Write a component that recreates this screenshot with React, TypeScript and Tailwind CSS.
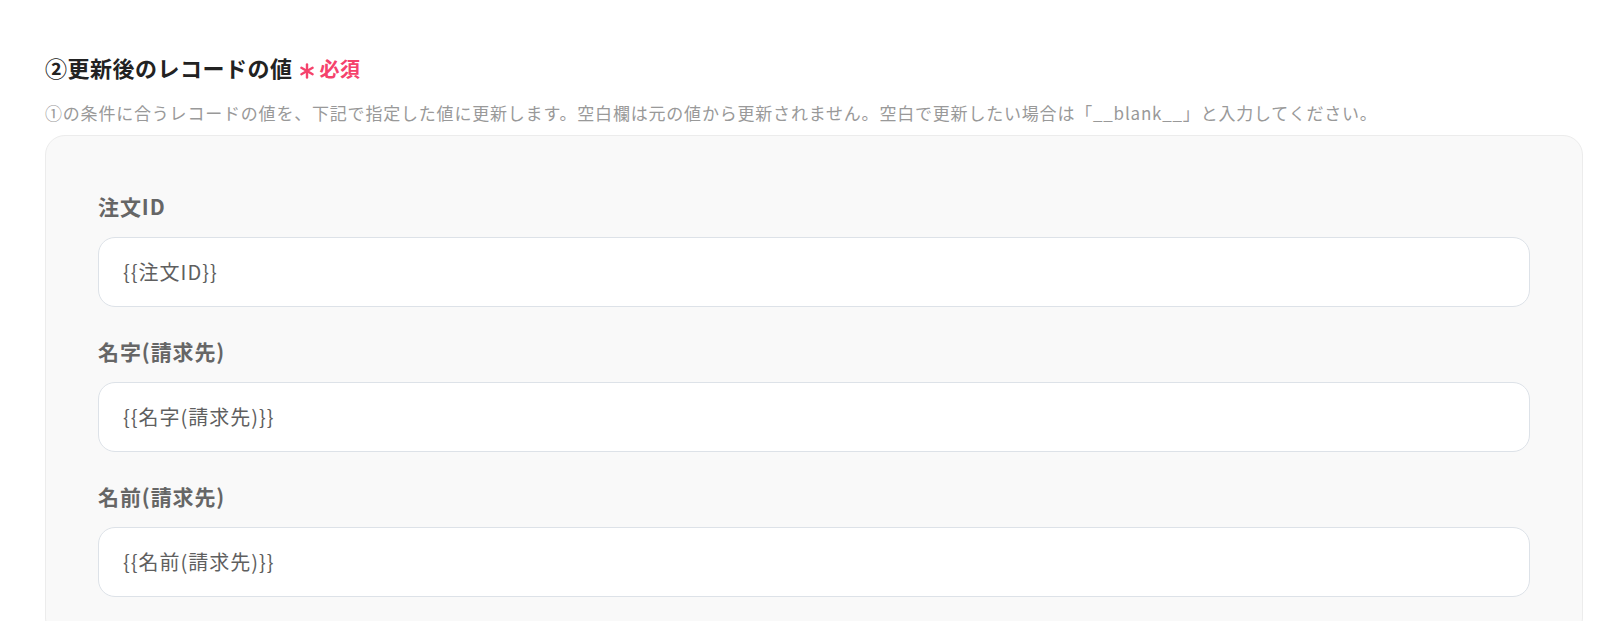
import React from "react";

const fields = [
  { label: "注文ID", value: "{{注文ID}}" },
  { label: "名字(請求先)", value: "{{名字(請求先)}}" },
  { label: "名前(請求先)", value: "{{名前(請求先)}}" },
];

const font = {
  fontFamily: '"Noto Sans CJK JP", "Noto Sans", sans-serif',
};

// Six-armed asterisk used as the "required" marker
function RequiredStar() {
  return (
    <svg width="16" height="16" viewBox="0 0 16 16" className="mt-[8px]">
      <g stroke="#f5426c" strokeWidth="2.4" strokeLinecap="round">
        <line x1="8" y1="1.5" x2="8" y2="14.5" />
        <line x1="2.4" y1="4.75" x2="13.6" y2="11.25" />
        <line x1="2.4" y1="11.25" x2="13.6" y2="4.75" />
      </g>
    </svg>
  );
}

export default function App() {
  return (
    <div className="min-h-[621px] w-full bg-white overflow-hidden" style={font}>
      <div className="pl-[45px] pr-[17px] pt-[52px]">
        <div className="flex items-center h-[30px]">
          <h2 className="text-[22px] leading-[30px] font-bold text-[#222] tracking-[0.5px]">
            ②更新後のレコードの値
          </h2>
          <span className="ml-[6px] flex items-center gap-[5px] text-[#f5426c] font-bold">
            <RequiredStar />
            <span className="mt-[3px] text-[20px] leading-[30px] tracking-[0.5px]">必須</span>
          </span>
        </div>
        <p className="mt-[19px] text-[17px] leading-[24px] text-[#999] tracking-[0.8px] whitespace-nowrap">
          ①の条件に合うレコードの値を、下記で指定した値に更新します。空白欄は元の値から更新されません。空白で更新したい場合は「__blank__」と入力してください。
        </p>
        <div className="mt-[10px] rounded-[20px] border border-[#ececec] bg-[#f9f9f9] px-[52px] pt-[56px] pb-[40px]">
          <div className="flex flex-col gap-[30px]">
            {fields.map((f) => (
              <div key={f.label} className="flex flex-col gap-[17px]">
                <label className="text-[21px] leading-[28px] font-bold text-[#666] tracking-[0.9px]">
                  {f.label}
                </label>
                <div className="h-[70px] rounded-[17px] border border-[#dde2e8] bg-white px-[24px] flex items-center">
                  <span className="text-[20px] text-[#5f5f5f] tracking-[1px]">{f.value}</span>
                </div>
              </div>
            ))}
          </div>
        </div>
      </div>
    </div>
  );
}
